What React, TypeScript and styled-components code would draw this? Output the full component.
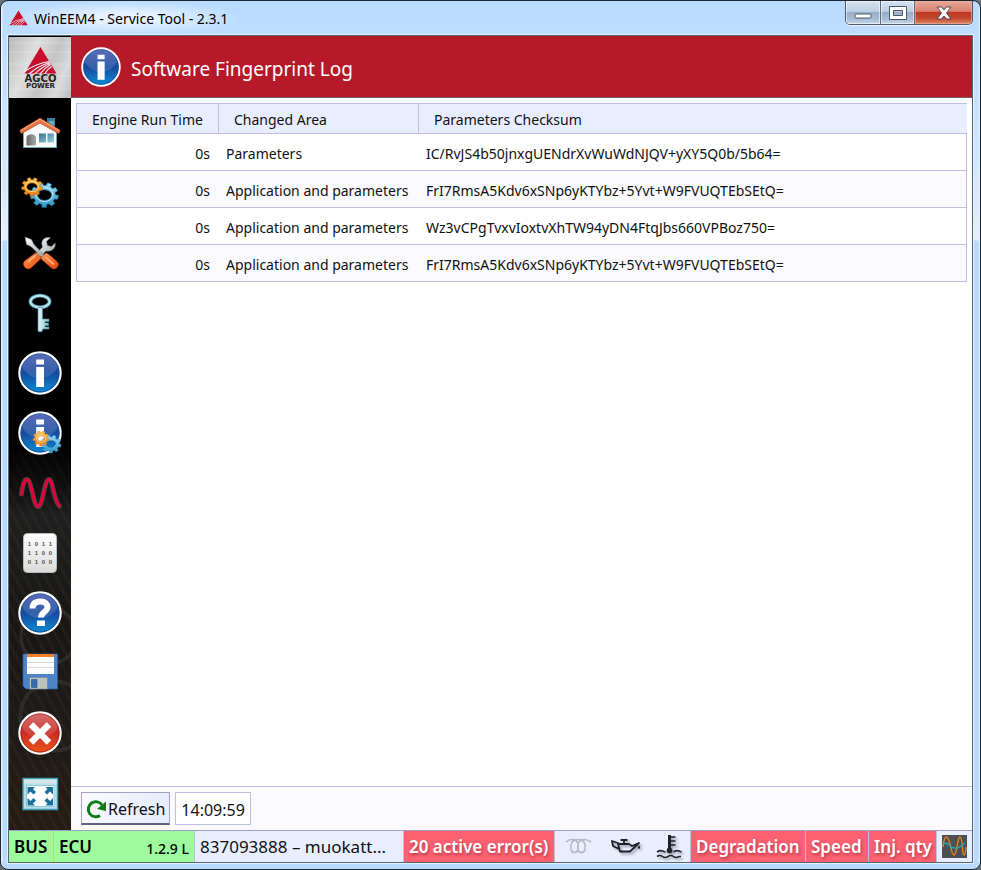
import React from 'react';
import styled, { createGlobalStyle } from 'styled-components';

const line = '#bfbfe3';

const GlobalStyle = createGlobalStyle`
  * { box-sizing: border-box; }
  body {
    margin: 0;
    background: #6d7176;
    color: #111;
    font-family: "Noto Sans", "Open Sans", sans-serif;
    font-size: 14px;
  }
  button { font: inherit; color: inherit; padding: 0; border: 0; background: none; }
`;

const Window = styled.div`
  display: flex;
  flex-direction: column;
  min-height: 100vh;
  padding: 0 7px 6px;
  border: 1px solid #1c2430;
  border-radius: 8px;
  background:
    linear-gradient(90deg, #ffffff 0, #ffffff00 2px, #ffffff00 calc(100% - 2px), #d9f3ff 100%),
    linear-gradient(#b8daff, #c2dffe 60px, #d9e9fa 200px, #e6f0fb 239px, #b9daff 240px);
`;

const TitleBar = styled.header`
  display: flex;
  align-items: flex-start;
  justify-content: space-between;
  height: 34px;
`;

const Caption = styled.div`
  display: flex;
  align-items: center;
  gap: 6px;
  height: 34px;
  padding: 0 12px 0 1px;
  color: #000;
  background: radial-gradient(ellipse at center, #ffffffa0 20%, #ffffff00 72%);
`;

const WindowButtons = styled.div`
  display: flex;
  height: 24px;
  border: 1px solid #4d5a6c;
  border-top: 0;
  border-radius: 0 0 5px 5px;
  overflow: hidden;
  box-shadow: 0 1px 0 #ffffffb0;
`;

const WindowButton = styled.button<{ $close?: boolean }>`
  display: grid;
  place-items: center;
  width: ${p => (p.$close ? 58 : 34)}px;
  border-left: ${p => (p.$close ? '1px solid #4d5a6c' : '0')};
  box-shadow: inset 0 0 0 1px ${p => (p.$close ? '#f0b0a0a0' : '#ffffff90')};
  background: ${p => p.$close
    ? 'linear-gradient(#e9a99b 0, #d9826f 45%, #be3821 50%, #c4472f 75%, #dc8a63 100%)'
    : 'linear-gradient(#d3e2f2 0, #bed0e4 45%, #98afc8 50%, #a9bed5 80%, #c5d8ea 100%)'};
  & + & { border-left: 1px solid #5b6b80; }
`;

const Client = styled.div`
  flex: 1;
  display: flex;
  flex-direction: column;
  border: 1px solid #566573;
  outline: 1px solid #e4f2ff;
  background: #fff;
`;

const Body = styled.div`
  flex: 1;
  display: flex;
`;

const Sidebar = styled.nav`
  flex: none;
  width: 62px;
  display: flex;
  flex-direction: column;
  background:
    linear-gradient(#000 0 390px, #0000 480px),
    radial-gradient(circle at 40px 600px, #0000 0 26px, #4a484566 27px 29px, #0000 30px),
    radial-gradient(circle at 46px 680px, #0000 0 32px, #3a393788 33px 36px, #1b1a1990 37px 46px, #0000 47px),
    repeating-linear-gradient(62deg, #0000 0 5px, #57483024 6px 8px, #0000 9px),
    linear-gradient(#000 0 390px, #121212 430px, #1f1f1f 480px, #181716 580px, #1d1a17 680px, #251d14 100%);
`;

const Logo = styled.a`
  display: block;
  height: 62px;
  border-top: 1px solid #000;
  background: linear-gradient(115deg, #b9b9b9, #dedede 35%, #c4c4c4 60%, #dadada 80%, #bdbdbd);
  margin-bottom: 5px;
  svg { display: block; }
`;

const NavButton = styled.button`
  height: 60px;
  svg { display: block; }
`;

const Main = styled.main`
  flex: 1;
  min-width: 0;
  display: flex;
  flex-direction: column;
`;

const PageHeader = styled.div`
  display: flex;
  align-items: center;
  gap: 10px;
  height: 62px;
  padding: 0 10px;
  border-bottom: 1px solid #6b5c6c;
  background: #b61a2a;
  color: #fff;
`;

const PageTitle = styled.h1`
  margin: 0;
  padding-top: 4px;
  font-size: 19px;
  font-weight: 400;
`;

const TableArea = styled.div`
  flex: 1;
  padding: 5px;
`;

const LogTable = styled.table`
  width: 100%;
  table-layout: fixed;
  border-spacing: 0;
  border-left: 1px solid ${line};
`;

const Column = styled.col<{ $width?: number }>`
  width: ${p => (p.$width ? p.$width + 'px' : 'auto')};
`;

const HeadCell = styled.th`
  height: 31px;
  padding: 2px 15px 0;
  text-align: left;
  font-weight: 400;
  background: #e8eeff;
  border: solid ${line};
  border-width: 1px 1px 1px 0;
  &:last-child { border-right: 0; }
`;

const LogRow = styled.tr`
  &:nth-child(even) { background: #fafafd; }
`;

const Cell = styled.td<{ $right?: boolean }>`
  height: 37px;
  padding: 3px 9px 0 7px;
  text-align: ${p => (p.$right ? 'right' : 'left')};
  white-space: nowrap;
  border-bottom: 1px solid ${line};
  &:last-child { border-right: 1px solid ${line}; }
`;

const Toolbar = styled.div`
  display: flex;
  gap: 5px;
  height: 44px;
  padding: 5px 10px;
  border-top: 1px solid ${line};
  background: #fafafd;
  font-size: 16px;
`;

const RefreshButton = styled.button`
  display: flex;
  align-items: center;
  padding: 2px 4px 0;
  border: 1px solid #a3a3c9;
  border-bottom: 2px solid #60607f;
  background: linear-gradient(100deg, #fafaff, #e6ecff);
`;

const Clock = styled.time`
  display: flex;
  align-items: center;
  padding: 2px 5px 0;
  border: 1px solid ${line};
  background: #fff;
`;

const StatusBar = styled.footer`
  display: flex;
  height: 32px;
  border-top: 1px solid #9f9fc4;
  font-size: 17px;
  background: #e8eeff;
`;

type Tone = 'ok' | 'error' | 'plain';
const tones: Record<Tone, string> = { ok: '#9dfb9d', error: '#fb6171', plain: '#e8eeff' };

const Status = styled.div<{ $tone: Tone; $width?: number; $grow?: boolean }>`
  display: flex;
  align-items: center;
  justify-content: space-between;
  flex: ${p => (p.$grow ? '1 1' : '0 0')} ${p => (p.$width ? p.$width + 'px' : 'auto')};
  min-width: 0;
  padding: 0 5px;
  white-space: nowrap;
  background: ${p => tones[p.$tone]};
  border-right: 1px solid ${line};
  ${p => p.$tone === 'error' && 'color: #fff; font-weight: 600; text-shadow: 1px 2px 3px #7d202c90;'}
  ${p => p.$tone === 'ok' && 'font-weight: 600; color: #000;'}
  &:last-child { border-right: 0; }
`;

const Version = styled.span`
  font-size: 14px;
  font-weight: 500;
  padding-top: 4px;
`;

const DeviceName = styled.span`
  font-size: 17px;
`;

const HiddenSvg = styled.svg`
  position: absolute;
  width: 0;
  height: 0;
`;

const ShadowedSvg = styled.svg`
  overflow: visible;
  filter: drop-shadow(2px 2px 1px #00000050);
`;

function gearPath(cx: number, cy: number, rx: number, ry: number, teeth: number, hole: number) {
  const pts: string[] = [];
  for (let i = 0; i < teeth; i++) {
    const step = (Math.PI * 2) / teeth;
    const a = i * step + 0.2;
    [[-0.32, 0.78], [-0.22, 1], [0.22, 1], [0.32, 0.78]].forEach(([o, r]) => {
      const t = a + o * step;
      pts.push(`${(cx + Math.cos(t) * rx * r).toFixed(1)} ${(cy + Math.sin(t) * ry * r).toFixed(1)}`);
    });
  }
  const hx = rx * hole, hy = ry * hole * 0.85;
  return `M${pts.join('L')}ZM${cx - hx} ${cy}a${hx} ${hy} 0 1 0 ${hx * 2} 0a${hx} ${hy} 0 1 0 ${-hx * 2} 0Z`;
}

const Gradients = () => (
  <HiddenSvg aria-hidden="true">
    <defs>
      <linearGradient id="blueBall" x2="0" y2="1"><stop stopColor="#4655b0" /><stop offset=".5" stopColor="#164a9e" /><stop offset="1" stopColor="#0b8fd8" /></linearGradient>
      <linearGradient id="redBall" x2="0" y2="1"><stop stopColor="#cf5555" /><stop offset=".5" stopColor="#c92a22" /><stop offset="1" stopColor="#ef5a1c" /></linearGradient>
      <linearGradient id="orange" x2="0" y2="1"><stop stopColor="#ffc94a" /><stop offset="1" stopColor="#ee7d10" /></linearGradient>
      <linearGradient id="cyan" x2="0" y2="1"><stop stopColor="#9adcf3" /><stop offset="1" stopColor="#2f93c4" /></linearGradient>
      <linearGradient id="steel" x2="1" y2="1"><stop stopColor="#fff" /><stop offset="1" stopColor="#999fa3" /></linearGradient>
      <linearGradient id="handle" x2="1" y2="1"><stop stopColor="#ff9d58" /><stop offset="1" stopColor="#e84408" /></linearGradient>
      <linearGradient id="door" x2="1"><stop stopColor="#666" /><stop offset="1" stopColor="#aaa" /></linearGradient>
      <linearGradient id="pane" x2="1" y2="1"><stop stopColor="#2f7391" /><stop offset="1" stopColor="#a5d0df" /></linearGradient>
      <linearGradient id="paper" x2="0" y2="1"><stop stopColor="#fff" /><stop offset="1" stopColor="#d9dadb" /></linearGradient>
      <linearGradient id="keyMetal" x2="1"><stop stopColor="#dff5fa" /><stop offset="1" stopColor="#8bbecd" /></linearGradient>
    </defs>
  </HiddenSvg>
);

const CellSvg = ({ children }: { children: React.ReactNode }) => (
  <svg width="62" height="60" viewBox="0 0 62 60" aria-hidden="true">{children}</svg>
);

const Ball = ({ red }: { red?: boolean }) => (
  <>
    <circle cx="31" cy="30" r="20.6" fill={red ? 'url(#redBall)' : 'url(#blueBall)'} stroke="#fff" strokeWidth="2.2" />
    <circle cx="31" cy="30" r="19" fill="none" stroke={red ? '#a92320' : '#164c94'} strokeWidth="1" />
    <path d="M13 24a18.5 18.5 0 0 1 36 0Q43 35 31 35T13 24Z" fill="#fff" opacity=".13" />
  </>
);

const InfoMark = () => <path d="M27.2 16.500h7.800v5h-7.800ZM27.200 24h7.800v20h-7.800Z" fill="#fff" />;

const HouseIcon = () => (
  <CellSvg>
    <path d="M38 15h8v12h-8Z" fill="#397f9c" /><path d="M40 18h5v8h-5Z" fill="#6baac2" />
    <path d="M14.500 27 31 18l16.500 9v17.500h-33Z" fill="#fafafa" stroke="#71a5b6" />
    <path d="M17.500 42.500V34a5 4 0 0 1 9.500 0v8.500Z" fill="url(#door)" />
    <path d="M30 30.500h7v9h-7ZM38.500 30.500h6.500v9h-6.500Z" fill="url(#pane)" />
    <path d="M31 15 11 27v2l1.500 1.500L31 20l18.500 10.500L51 29v-2Z" fill="#ea7544" stroke="#a43c17" strokeWidth=".7" />
    <path d="M12 27.500 31 16l19 11.500" fill="none" stroke="#ffb083" />
  </CellSvg>
);

const GearsIcon = () => (
  <CellSvg>
    <path d={gearPath(35.5, 32, 14, 12.500, 9, 0.5)} fill="url(#cyan)" fillRule="evenodd" stroke="#1d79a6" strokeWidth=".6" />
    <ellipse cx="35.500" cy="31.500" rx="8.500" ry="7" fill="none" stroke="#c4ecf8" />
    <path d={gearPath(23, 24, 10.500, 9.500, 9, 0.5)} fill="url(#orange)" fillRule="evenodd" stroke="#b35a08" strokeWidth=".6" />
    <ellipse cx="23" cy="23.500" rx="6.500" ry="5" fill="none" stroke="#ffe59b" />
  </CellSvg>
);

const ToolsIcon = () => (
  <CellSvg>
    <path d="M27 31 33.500 24q-2-5 1-8 3-2.500 7-1.500l-4 4 1 4 4 1 3.800-3.500q.5 4-2.300 6.500-3 2.500-7 1.500l-7 7Z" fill="url(#steel)" stroke="#75797b" strokeWidth=".5" />
    <path d="m27 29.500 5.500 5.500-10 9.500q-3.500 3-6.500 0T15.500 38Z" fill="url(#handle)" stroke="#b83a0a" strokeWidth=".5" />
    <path d="m16 14 6.500 2.500 2.500 5L36 33l-2.500 2L22 23.500l-4.500-2Z" fill="url(#steel)" stroke="#777b7e" strokeWidth=".5" />
    <path d="m32 35 4.500-5q2 0 4 2l7.500 6.500q3 3 0 6t-6 0l-7-6q-2-1-3-3.500Z" fill="url(#handle)" stroke="#b83a0a" strokeWidth=".5" />
    <path d="m36.500 34 8.500 7.500M19 39l8-7" stroke="#ffbd8b" strokeWidth="1.600" />
  </CellSvg>
);

const KeyIcon = () => (
  <CellSvg>
    <ellipse cx="31" cy="18.500" rx="9.500" ry="5.800" fill="none" stroke="#4d8fa4" strokeWidth="3.800" />
    <ellipse cx="31" cy="18.500" rx="9.500" ry="5.800" fill="none" stroke="#b9e3ed" strokeWidth="2.200" />
    <path d="M29 24.500h4.500V36h6.500v2.500h-4V40h3.500v2.500H36V44h4v2h-6.500v2l-2.500 1-2-1Z" fill="url(#keyMetal)" stroke="#4d8fa4" strokeWidth=".7" />
  </CellSvg>
);

const InfoIcon = () => <CellSvg><Ball /><InfoMark /></CellSvg>;

const InfoGearsIcon = () => (
  <CellSvg>
    <Ball /><InfoMark />
    <path d={gearPath(42, 41, 10, 9, 9, 0.5)} fill="url(#cyan)" fillRule="evenodd" stroke="#3ea0c8" strokeWidth=".5" />
    <path d={gearPath(32, 35.500, 8, 7.500, 9, 0.42)} fill="url(#orange)" fillRule="evenodd" stroke="#e58429" strokeWidth=".5" />
    <ellipse cx="32" cy="35.500" rx="4.500" ry="4" fill="none" stroke="#ffd39a" />
  </CellSvg>
);

const wave = 'M12.500 31C14 21 15 16.500 18 16.500c5 0 6 27 11 27s6-27 11-27c4 0 5 23 10.500 26.500';

const WaveIcon = () => (
  <CellSvg>
    <path d={wave} fill="none" stroke="#6a6e72" strokeWidth="4.800" strokeLinecap="round" opacity=".55" />
    <path d={wave} fill="none" stroke="#e60038" strokeWidth="3" strokeLinecap="round" />
  </CellSvg>
);

const BinaryIcon = () => (
  <CellSvg>
    <rect x="14.500" y="10.500" width="33" height="39" rx="4" fill="url(#paper)" stroke="#b9babb" />
    <g fontFamily="Liberation Sans, sans-serif" fontSize="6" fontWeight="700" fill="#555" textAnchor="middle">
      {['1011', '1100', '0100'].map((row, r) =>
        row.split('').map((digit, c) => <text key={`${r}${c}`} x={20.500 + c * 7} y={23 + r * 9}>{digit}</text>))}
    </g>
  </CellSvg>
);

const HelpIcon = () => (
  <CellSvg>
    <Ball />
    <path d="M23.500 25.500c0-5 3-7 8-7s7 2.500 7 5.500c0 5-6.500 5-6.500 10.500" fill="none" stroke="#fff" strokeWidth="6" />
    <path d="M28 37.500h8v5.500h-8Z" fill="#fff" />
  </CellSvg>
);

const SaveIcon = () => (
  <CellSvg>
    <path d="M14 11h34.500v35H17l-3-3Z" fill="#4e83c9" stroke="#2b5b9d" strokeWidth=".7" />
    <path d="M18 11h27v3H18Z" fill="#f38025" />
    <path d="M18 14h27v17H18Z" fill="#fdfdfd" />
    <path d="M18 19.500h27M18 24.500h27" stroke="#d8dadb" />
    <path d="M20.500 34.500h18V46h-18Z" fill="#bdc3bf" stroke="#737f82" strokeWidth=".6" />
    <path d="M22.500 36.500h5.500v8h-5.500Z" fill="#356cae" stroke="#244f87" strokeWidth=".6" />
  </CellSvg>
);

const CloseIcon = () => (
  <CellSvg>
    <Ball red />
    <path d="m22 21.500 18 18m0-18-18 18" stroke="#fff" strokeWidth="6.500" />
  </CellSvg>
);

const FullscreenIcon = () => (
  <CellSvg>
    <path d="M14 15.500h34.500v31H14Z" fill="#b7dfe9" stroke="#3e9db9" strokeWidth="1.400" />
    <path d="M15 16.500h32.500v4H15Z" fill="#d5e6ea" />
    <path d="M17.500 22.500h27.500v21H17.500Z" fill="#fff" stroke="#72b8cc" strokeWidth=".7" />
    <path d="M18.500 24h7.500l-2 2 3 3-2.500 2.500-3-3-3 3ZM44 24h-7.500l2 2-3 3 2.500 2.500 3-3 3 3ZM18.500 42.500h7.500l-2-2 3-3-2.500-2.500-3 3-3-3ZM44 42.500h-7.500l2-2-3-3 2.500-2.500 3 3 3-3Z" fill="#18719b" />
  </CellSvg>
);

const AgcoMark = () => (
  <>
    <path d="M18 -1 34.500 25.500H1.500Z" fill="#c8102e" />
    <path d="M27 13.500Q12 16 1 24M27.500 14.500Q16 17.500 5.500 26.500M28 15.500Q19 19 11.500 26.500M28.500 16.500Q22 20 17 26.500M29.500 18.500Q25 21 22 26.500" stroke="#f4f4f4" strokeWidth="1.200" fill="none" />
  </>
);

const BrandLogo = () => (
  <svg width="62" height="61" viewBox="0 0 62 61" role="img" aria-label="AGCO Power">
    <path d="M0 6h62M0 15h62M0 27h62M0 39h62M0 52h62" stroke="#fff" opacity=".22" />
    <svg x="15" y="10" width="33" height="27" viewBox="1 -1 34 27" preserveAspectRatio="none"><AgcoMark /></svg>
    <g fontFamily="DejaVu Sans, sans-serif" fontWeight="700" fill="#252525" textAnchor="middle">
      <text x="31.500" y="44.500" fontSize="10">AGCO</text>
      <text x="31.500" y="50.500" fontSize="7">POWER</text>
    </g>
  </svg>
);

const navItems: [string, React.FC][] = [
  ['Home', HouseIcon], ['Settings', GearsIcon], ['Tools', ToolsIcon], ['Access key', KeyIcon],
  ['Information', InfoIcon], ['System information', InfoGearsIcon], ['Measurements', WaveIcon],
  ['Data', BinaryIcon], ['Help', HelpIcon], ['Save', SaveIcon], ['Close', CloseIcon], ['Full screen', FullscreenIcon],
];

const rows = [
  ['0s', 'Parameters', 'IC/RvJS4b50jnxgUENdrXvWuWdNJQV+yXY5Q0b/5b64='],
  ['0s', 'Application and parameters', 'FrI7RmsA5Kdv6xSNp6yKTYbz+5Yvt+W9FVUQTEbSEtQ='],
  ['0s', 'Application and parameters', 'Wz3vCPgTvxvIoxtvXhTW94yDN4FtqJbs660VPBoz750='],
  ['0s', 'Application and parameters', 'FrI7RmsA5Kdv6xSNp6yKTYbz+5Yvt+W9FVUQTEbSEtQ='],
];

const Indicators = () => (
  <>
    <svg width="36" height="20" viewBox="-5 0 36 20" role="img" aria-label="Glow plugs">
      <path d="M1 5Q4 2 8 2.500c5 1 6 5 5 10-1 4-6 4-7 0C5 7 7 2.500 13 2.500S21 7 20 12.500c-1 4-6 4-7 0-1-5 0-9 5-10q4-.5 8 2.500" fill="none" stroke="#b4b8c3" strokeWidth="1.600" />
    </svg>
    <ShadowedSvg width="32" height="20" viewBox="0 0 32 20" role="img" aria-label="Oil pressure">
      <path d="M2 4l6 2 1 6-6-3ZM8 7h11l3 2 7-3-9 8.500H10L8 7M14 7V3M10.500 3h7" fill="none" stroke="#1d2226" strokeWidth="1.800" strokeLinejoin="round" />
      <path d="M29 8q2 3 0 4-2-1 0-4Z" fill="#1d2226" />
    </ShadowedSvg>
    <ShadowedSvg width="30" height="26" viewBox="0 0 30 26" role="img" aria-label="Coolant temperature">
      <g fill="none" stroke="#1d2226">
        <path d="M14.500 1v15" strokeWidth="3" /><path d="M15 3h5.500M15 7h5.500M15 11h5.500" strokeWidth="1.600" />
        <circle cx="14.500" cy="16.500" r="2.500" fill="#1d2226" />
        <path d="M2 18q3-2 5.500-1t3 1M18.500 18q3-2 5.500-1t2.500 1" strokeWidth="1.600" />
        <path d="M2 22.500q3-2 5.500 0t5.500 0 5.500 0 5.500 0h2" strokeWidth="1.600" />
      </g>
    </ShadowedSvg>
  </>
);

export default function App() {
  return (
    <Window>
      <GlobalStyle />
      <Gradients />
      <TitleBar>
        <Caption>
          <svg width="19" height="16" viewBox="1 -1 34 27" aria-hidden="true"><AgcoMark /></svg>
          WinEEM4 - Service Tool - 2.3.1
        </Caption>
        <WindowButtons>
          <WindowButton aria-label="Minimize">
            <svg width="20" height="16"><rect x="2" y="9" width="16" height="4" rx="1" fill="#fff" stroke="#4d5666" /></svg>
          </WindowButton>
          <WindowButton aria-label="Maximize">
            <svg width="20" height="16"><path d="M1.500 1.500h17v13h-17ZM5.500 5.500v5h9v-5Z" fill="#fff" fillRule="evenodd" stroke="#4d5666" /></svg>
          </WindowButton>
          <WindowButton $close aria-label="Close window">
            <svg width="18" height="16"><path d="M2 2h4.500L9 5l2.500-3H16l-4.500 6 4.500 6h-4.500L9 11l-2.500 3H2l4.500-6Z" fill="#f8f8f8" stroke="#4a4f60" /></svg>
          </WindowButton>
        </WindowButtons>
      </TitleBar>
      <Client>
        <Body>
          <Sidebar>
            <Logo href="#home"><BrandLogo /></Logo>
            {navItems.map(([label, Icon]) => (
              <NavButton key={label} aria-label={label}><Icon /></NavButton>
            ))}
          </Sidebar>
          <Main>
            <PageHeader>
              <svg width="40" height="40" viewBox="9 8 44 44" aria-hidden="true"><Ball /><InfoMark /></svg>
              <PageTitle>Software Fingerprint Log</PageTitle>
            </PageHeader>
            <TableArea>
              <LogTable>
                <colgroup><Column $width={142} /><Column $width={200} /><Column /></colgroup>
                <thead>
                  <tr>
                    <HeadCell>Engine Run Time</HeadCell>
                    <HeadCell>Changed Area</HeadCell>
                    <HeadCell>Parameters Checksum</HeadCell>
                  </tr>
                </thead>
                <tbody>
                  {rows.map(([time, area, sum], i) => (
                    <LogRow key={i}>
                      <Cell $right>{time}</Cell>
                      <Cell>{area}</Cell>
                      <Cell>{sum}</Cell>
                    </LogRow>
                  ))}
                </tbody>
              </LogTable>
            </TableArea>
            <Toolbar>
              <RefreshButton>
                <svg width="22" height="22" viewBox="0 0 22 22" aria-hidden="true">
                  <path d="M14 17.500A7.500 7.500 0 1 1 16 7" fill="none" stroke="#0b7d17" strokeWidth="3" />
                  <path d="M20 3.500v9.500l-9-2Z" fill="#0b7d17" />
                </svg>
                Refresh
              </RefreshButton>
              <Clock>14:09:59</Clock>
            </Toolbar>
          </Main>
        </Body>
        <StatusBar>
          <Status $tone="ok" $width={45}>BUS</Status>
          <Status $tone="ok" $width={141}>ECU<Version>1.2.9 L</Version></Status>
          <Status $tone="plain" $width={209} $grow><DeviceName>837093888 – muokatt...</DeviceName></Status>
          <Status $tone="error" $width={151}>20 active error(s)</Status>
          <Status $tone="plain" $width={136}><Indicators /></Status>
          <Status $tone="error" $width={115}>Degradation</Status>
          <Status $tone="error" $width={63}>Speed</Status>
          <Status $tone="error" $width={68}>Inj. qty</Status>
          <Status $tone="plain" $width={35}>
            <svg width="25" height="23" viewBox="0 0 25 23" role="img" aria-label="Signal chart">
              <path d="M0 0h25v23H0Z" fill="#4d5050" />
              <path d="M1 12Q2 2 4.500 2c4 0 4 18 7.500 18s3-18 6-18 2 18 4 18q1.500 0 2-8" fill="none" stroke="#e08427" strokeWidth="1.400" />
              <path d="M1 9q3-2 6 1 4 4 8 3t8-5" fill="none" stroke="#20a9b5" strokeWidth="1.500" />
            </svg>
          </Status>
        </StatusBar>
      </Client>
    </Window>
  );
}
